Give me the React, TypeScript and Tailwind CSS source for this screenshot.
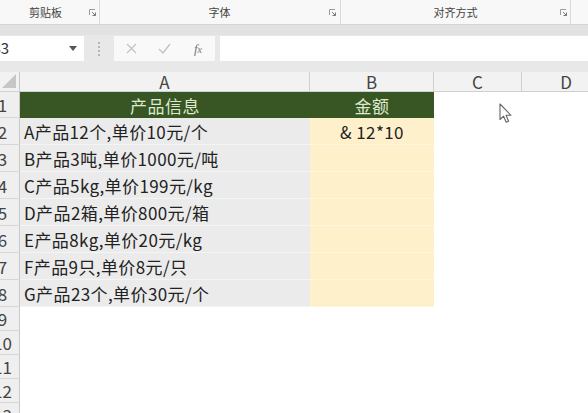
import React from 'react';

const font = { fontFamily: '"Noto Sans CJK SC", "Noto Sans", sans-serif' };

const items = [
  'A产品12个,单价10元/个',
  'B产品3吨,单价1000元/吨',
  'C产品5kg,单价199元/kg',
  'D产品2箱,单价800元/箱',
  'E产品8kg,单价20元/kg',
  'F产品9只,单价8元/只',
  'G产品23个,单价30元/个',
];

const Launcher = () => (
  <svg width="7" height="7" viewBox="0 0 7 7" className="shrink-0">
    <path d="M0.5 6V0.5H6" fill="none" stroke="#9a9a9a" strokeWidth="1" />
    <path d="M3 3L6.5 6.5M6.5 3.5V6.5H3.5" fill="none" stroke="#777" strokeWidth="1" />
  </svg>
);

const RowHead = ({ n, h }: { n: number; h: string }) => (
  <div
    className={`${h} -ml-[14px] w-[34px] shrink-0 flex items-center justify-center bg-[#efefef] border-r border-r-[#c9c9c9] border-b border-b-[#d7d7d7] text-[17px] text-[#444]`}
  >
    {n}
  </div>
);

export default function App() {
  return (
    <div className="w-[588px] h-[413px] overflow-hidden bg-white text-[#222]" style={font}>
      {/* ribbon group labels */}
      <div className="h-[25px] flex bg-[#f8f8f8] border-b border-[#d6d6d6] text-[11px] text-[#444]">
        <div className="w-[100px] flex items-center border-r border-[#d9d9d9] pr-[3px]">
          <span className="flex-1 text-center pl-[2px]">剪贴板</span>
          <Launcher />
        </div>
        <div className="w-[241px] flex items-center border-r border-[#d9d9d9] pr-[4px]">
          <span className="flex-1 text-center pl-[10px]">字体</span>
          <Launcher />
        </div>
        <div className="w-[230px] flex items-center border-r border-[#d9d9d9] pr-[3px]">
          <span className="flex-1 text-center pl-[10px]">对齐方式</span>
          <Launcher />
        </div>
        <div className="flex-1" />
      </div>

      {/* formula bar */}
      <div className="h-[47px] bg-[#e8e8e8] flex flex-col">
        <div className="h-[10px] bg-[#e2e2e2]" />
        <div className="flex items-start pt-[1px] h-[26px]">
          <div className="-ml-[12px] w-[96px] h-[25px] bg-white flex items-center pl-[3px] pr-[7px] text-[15px] text-[#333]">
            <span className="flex-1">B3</span>
            <svg width="8" height="5" viewBox="0 0 8 5">
              <path d="M0 0H8L4 5Z" fill="#555" />
            </svg>
          </div>
          <div className="w-[30px] h-[25px] flex flex-col items-center justify-center gap-[2px]">
            <span className="w-[2px] h-[2px] bg-[#b5b5b5]" />
            <span className="w-[2px] h-[2px] bg-[#b5b5b5]" />
            <span className="w-[2px] h-[2px] bg-[#b5b5b5]" />
            <span className="w-[2px] h-[2px] bg-[#b5b5b5]" />
          </div>
          <div className="w-[101px] h-[25px] bg-[#f9f9f9] flex items-center">
            <div className="w-[34px] flex justify-center">
              <svg width="11" height="11" viewBox="0 0 11 11">
                <path d="M1 1L10 10M10 1L1 10" stroke="#c4c4c4" strokeWidth="1.3" />
              </svg>
            </div>
            <div className="w-[33px] flex justify-center">
              <svg width="13" height="11" viewBox="0 0 13 11">
                <path d="M1 6L5 10L12 1" fill="none" stroke="#c4c4c4" strokeWidth="1.4" />
              </svg>
            </div>
            <div className="w-[34px] flex justify-center">
              <span className="italic text-[13px] text-[#777]" style={{ fontFamily: '"Liberation Serif", serif' }}>
                f<span className="text-[10px]">x</span>
              </span>
            </div>
          </div>
          <div className="w-[5px]" />
          <div className="flex-1 h-[25px] bg-white" />
        </div>
      </div>

      {/* column headers */}
      <div className="h-[20px] flex bg-[#f2f2f2] border-b border-[#d0d0d0] text-[17px] text-[#444] leading-none">
        <div className="-ml-[10px] w-[30px] shrink-0 flex items-end justify-end pr-[3px] pb-[3px] border-r border-[#c9c9c9]">
          <svg width="14" height="14" viewBox="0 0 14 14">
            <path d="M14 0V14H0Z" fill="#c6c6c6" />
          </svg>
        </div>
        <div className="w-[290px] shrink-0 flex items-center justify-center border-r border-[#d0d0d0]">A</div>
        <div className="w-[124px] shrink-0 flex items-center justify-center border-r border-[#d0d0d0]">B</div>
        <div className="w-[88px] shrink-0 flex items-center justify-center border-r border-[#d0d0d0]">C</div>
        <div className="w-[88px] shrink-0 flex items-center justify-center">D</div>
      </div>

      {/* sheet rows */}
      <div className="relative text-[17px] leading-none">
        <div className="flex">
          <RowHead n={1} h="h-[26px]" />
          <div className="w-[290px] shrink-0 h-[26px] bg-[#375623] text-[#dfe9cf] flex items-center justify-center tracking-[0.5px]">
            产品信息
          </div>
          <div className="w-[124px] shrink-0 h-[26px] bg-[#375623] text-[#dfe9cf] flex items-center justify-center tracking-[0.5px]">
            金额
          </div>
          <div className="flex-1" />
        </div>
        {items.map((t, i) => (
          <div key={t} className="flex">
            <RowHead n={i + 2} h="h-[27px]" />
            <div className="w-[290px] shrink-0 h-[27px] bg-[#ebebeb] border-b border-[#f4f4f4] flex items-center pl-[4px] whitespace-nowrap tracking-[0.4px]">
              {t}
            </div>
            <div className="w-[124px] shrink-0 h-[27px] bg-[#fff0cc] border-b border-[#fff5da] flex items-center justify-center tracking-[0.4px]">
              {i === 0 ? '& 12*10' : ''}
            </div>
            <div className="flex-1" />
          </div>
        ))}
        {[9, 10, 11, 12, 13].map((n) => (
          <div key={n} className="flex">
            <RowHead n={n} h="h-[24px]" />
            <div className="flex-1" />
          </div>
        ))}

        {/* mouse pointer */}
        <svg width="14" height="21" viewBox="0 0 14 21" className="absolute left-[499px] top-[11px]">
          <path d="M1 1V16.5L4.6 13.2L7.2 19.3L9.6 18.3L7.1 12.3H12Z" fill="#fff" stroke="#666" strokeWidth="1.1" strokeLinejoin="round" />
        </svg>
      </div>
    </div>
  );
}
